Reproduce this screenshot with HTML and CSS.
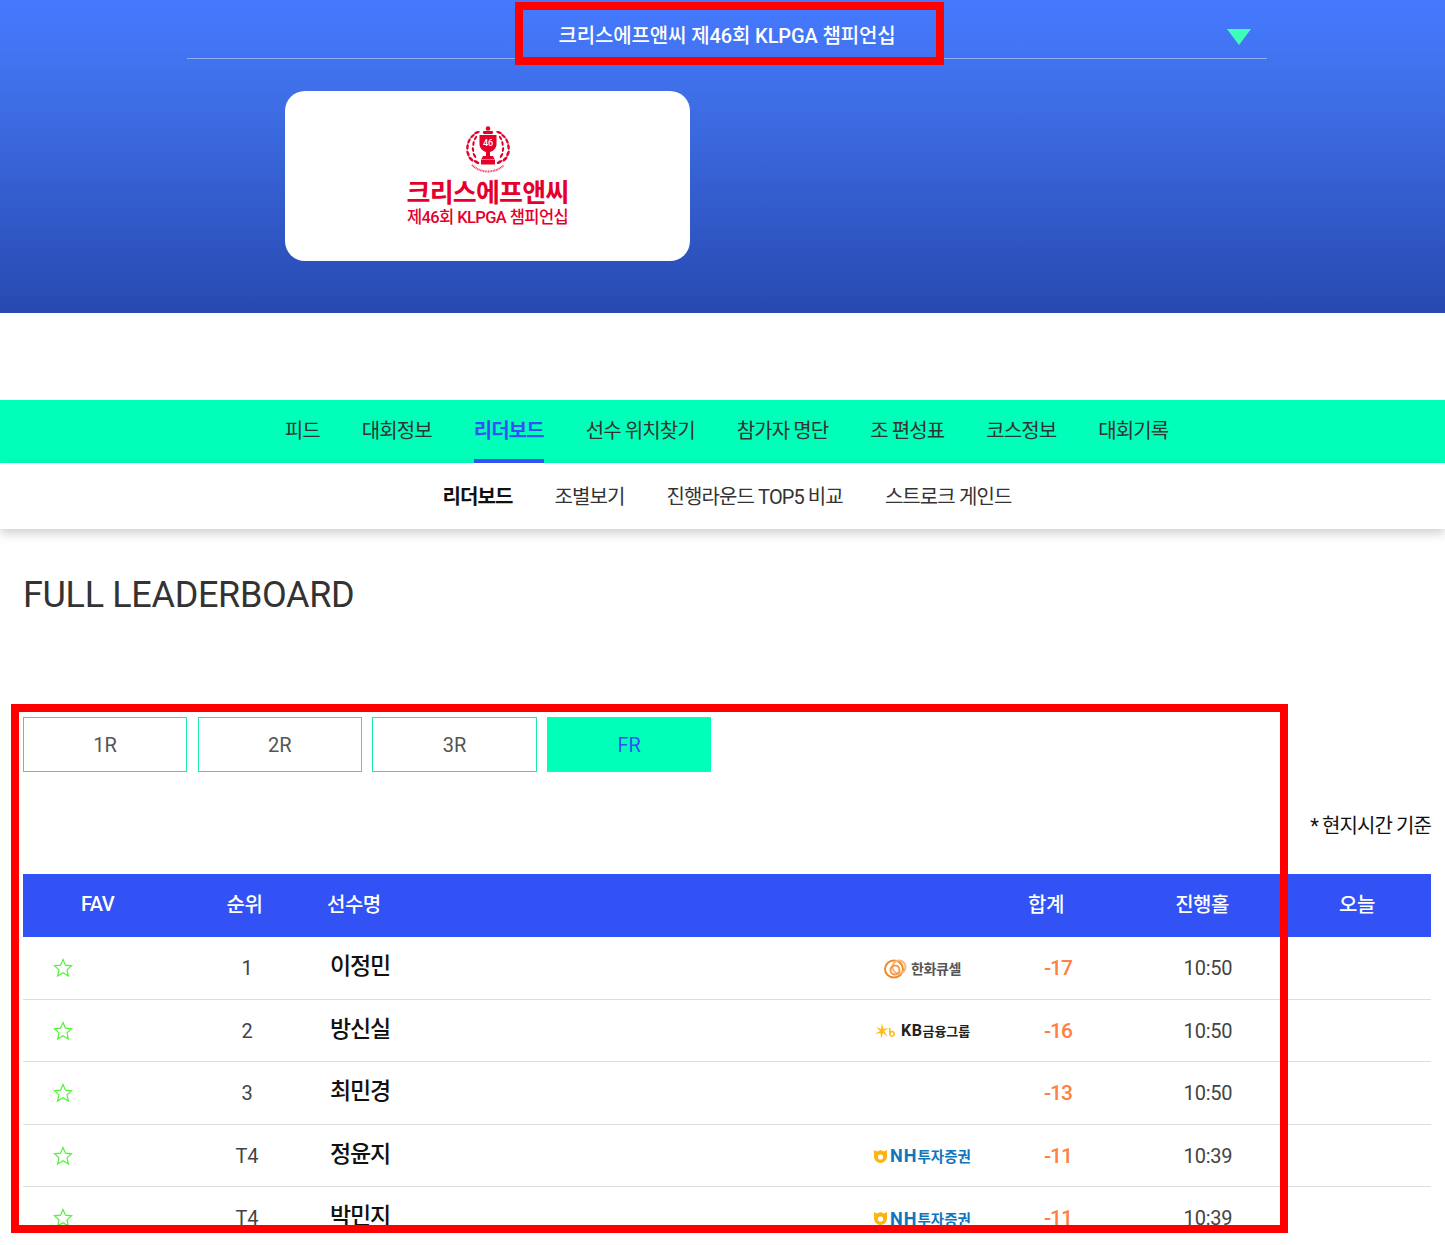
FILE: index.html
```html
<!DOCTYPE html>
<html lang="ko">
<head>
  <meta charset="UTF-8">
  <title>FULL LEADERBOARD</title>
  <link rel="stylesheet" href="styles.css">
</head>
<body>
  <div class="page">
    <header class="hero">
      <div class="tour-select">
        <span class="tour-name">크리스에프앤씨 제46회 KLPGA 챔피언십</span>
        <span class="tour-arrow"></span>
      </div>
      <div class="tour-card">
        <svg class="trophy" viewBox="0 0 48 48" width="48" height="48">
          <g fill="#e4002b">
            <circle cx="24" cy="2.500" r="2.300"/>
            <rect x="19" y="5" width="10" height="3" rx="1"/>
            <path d="M15.500 9h17v9c0 4-3 7-6.500 8v4h3l1.500 3h-13l1.500-3h3v-4c-3.500-1-6.500-4-6.500-8z"/>
            <rect x="17" y="33.500" width="14" height="5"/>
            <ellipse cx="13" cy="6.500" rx="3" ry="1.200" transform="rotate(-20 13 6.500)"/>
            <ellipse cx="8.500" cy="10" rx="3" ry="1.200" transform="rotate(-45 8.500 10)"/>
            <ellipse cx="11.500" cy="12" rx="2.500" ry="1.100" transform="rotate(-60 11.500 12)"/>
            <ellipse cx="5" cy="15" rx="3" ry="1.200" transform="rotate(-65 5 15)"/>
            <ellipse cx="9.500" cy="17.500" rx="2.500" ry="1.100" transform="rotate(-80 9.500 17.500)"/>
            <ellipse cx="3.500" cy="21" rx="3" ry="1.300" transform="rotate(-85 3.500 21)"/>
            <ellipse cx="9" cy="23.500" rx="2.600" ry="1.100" transform="rotate(80 9 23.500)"/>
            <ellipse cx="4" cy="27.500" rx="3.200" ry="1.300" transform="rotate(70 4 27.500)"/>
            <ellipse cx="10.500" cy="29.500" rx="2.800" ry="1.200" transform="rotate(60 10.500 29.500)"/>
            <ellipse cx="7" cy="33" rx="3.200" ry="1.300" transform="rotate(45 7 33)"/>
            <ellipse cx="12.500" cy="36" rx="3.200" ry="1.300" transform="rotate(30 12.500 36)"/>
            <ellipse cx="35" cy="6.500" rx="3" ry="1.200" transform="rotate(20 35 6.500)"/>
            <ellipse cx="39.500" cy="10" rx="3" ry="1.200" transform="rotate(45 39.500 10)"/>
            <ellipse cx="36.500" cy="12" rx="2.500" ry="1.100" transform="rotate(60 36.500 12)"/>
            <ellipse cx="43" cy="15" rx="3" ry="1.200" transform="rotate(65 43 15)"/>
            <ellipse cx="38.500" cy="17.500" rx="2.500" ry="1.100" transform="rotate(80 38.500 17.500)"/>
            <ellipse cx="44.500" cy="21" rx="3" ry="1.300" transform="rotate(85 44.500 21)"/>
            <ellipse cx="39" cy="23.500" rx="2.600" ry="1.100" transform="rotate(-80 39 23.500)"/>
            <ellipse cx="44" cy="27.500" rx="3.200" ry="1.300" transform="rotate(-70 44 27.500)"/>
            <ellipse cx="37.500" cy="29.500" rx="2.800" ry="1.200" transform="rotate(-60 37.500 29.500)"/>
            <ellipse cx="41" cy="33" rx="3.200" ry="1.300" transform="rotate(-45 41 33)"/>
            <ellipse cx="35.500" cy="36" rx="3.200" ry="1.300" transform="rotate(-30 35.500 36)"/>
          </g>
          <path d="M8 39c4 4 10 6.500 16 6.500s12-2.500 16-6.500" fill="none" stroke="#e4002b" stroke-width="2" stroke-dasharray="1 .6" opacity=".75"/>
          <text x="24" y="20" text-anchor="middle" class="trophy-num">46</text>
        </svg>
        <div class="card-title">크리스에프앤씨</div>
        <div class="card-sub">제46회 KLPGA 챔피언십</div>
      </div>
    </header>

    <nav class="main-nav">
      <a href="#">피드</a>
      <a href="#">대회정보</a>
      <a href="#" class="on">리더보드</a>
      <a href="#">선수 위치찾기</a>
      <a href="#">참가자 명단</a>
      <a href="#">조 편성표</a>
      <a href="#">코스정보</a>
      <a href="#">대회기록</a>
    </nav>
    <nav class="sub-nav">
      <a href="#" class="on">리더보드</a>
      <a href="#">조별보기</a>
      <a href="#">진행라운드 TOP5 비교</a>
      <a href="#">스트로크 게인드</a>
    </nav>

    <main class="content">
      <h1 class="board-title">FULL LEADERBOARD</h1>
      <div class="round-tabs">
        <a href="#">1R</a>
        <a href="#">2R</a>
        <a href="#">3R</a>
        <a href="#" class="on">FR</a>
      </div>
      <p class="time-note">* 현지시간 기준</p>

      <div class="board">
        <div class="board-head">
          <span>FAV</span>
          <span>순위</span>
          <span class="head-name">선수명</span>
          <span>합계</span>
          <span>진행홀</span>
          <span class="head-today">오늘</span>
        </div>

        <div class="board-row">
          <span class="fav"><svg class="star" viewBox="0 0 20 20" width="20" height="20"><path d="M10 1.500l2.500 5.700 6.100.6-4.600 4.100 1.400 6.100-5.400-3.200-5.400 3.200 1.400-6.100L1.400 7.800l6.100-.6z"/></svg></span>
          <span class="rank">1</span>
          <span class="player">이정민</span>
          <span class="sponsor hanwha">
            <svg viewBox="0 0 24 24" width="24" height="24" fill="none" stroke="#f08a24" stroke-width="2"><ellipse cx="10" cy="13" rx="9" ry="8.500"/><circle cx="15" cy="11" r="6.500" stroke="#f7b676"/><circle cx="11" cy="14" r="4.500" stroke="#f39a4a"/></svg>
            <b>한화큐셀</b>
          </span>
          <span class="total">-17</span>
          <span class="thru">10:50</span>
        </div>
        <div class="board-row">
          <span class="fav"><svg class="star" viewBox="0 0 20 20" width="20" height="20"><path d="M10 1.500l2.500 5.700 6.100.6-4.600 4.100 1.400 6.100-5.400-3.200-5.400 3.200 1.400-6.100L1.400 7.800l6.100-.6z"/></svg></span>
          <span class="rank">2</span>
          <span class="player">방신실</span>
          <span class="sponsor kb">
            <svg viewBox="0 0 22 16" width="22" height="16" fill="#fbbc15"><path d="M7 0l1.500 6L14 5 9 8l4 6-5-4-2 6-.5-6L0 11l5-3L1 4l5 2z"/><path d="M14 5h1.600v3.200a3 3 0 1 1-1.600 2.700zM15.600 11a1.400 1.400 0 1 0 2.800 0 1.400 1.400 0 1 0-2.800 0z" fill-rule="evenodd"/></svg>
            <b><span class="logo-latin">KB</span>금융그룹</b>
          </span>
          <span class="total">-16</span>
          <span class="thru">10:50</span>
        </div>
        <div class="board-row">
          <span class="fav"><svg class="star" viewBox="0 0 20 20" width="20" height="20"><path d="M10 1.500l2.500 5.700 6.100.6-4.600 4.100 1.400 6.100-5.400-3.200-5.400 3.200 1.400-6.100L1.400 7.800l6.100-.6z"/></svg></span>
          <span class="rank">3</span>
          <span class="player">최민경</span>
          <span class="sponsor"></span>
          <span class="total">-13</span>
          <span class="thru">10:50</span>
        </div>
        <div class="board-row">
          <span class="fav"><svg class="star" viewBox="0 0 20 20" width="20" height="20"><path d="M10 1.500l2.500 5.700 6.100.6-4.600 4.100 1.400 6.100-5.400-3.200-5.400 3.200 1.400-6.100L1.400 7.800l6.100-.6z"/></svg></span>
          <span class="rank">T4</span>
          <span class="player">정윤지</span>
          <span class="sponsor nh">
            <svg viewBox="0 0 13 14" width="13" height="14"><path d="M0 1l3 1.500L6.500 1 10 2.500 13 1v6.500a6.500 6.500 0 0 1-13 0z" fill="#fbb415"/><circle cx="6.500" cy="8" r="2.600" fill="#fff"/></svg>
            <b><span class="logo-latin">NH</span>투자증권</b>
          </span>
          <span class="total">-11</span>
          <span class="thru">10:39</span>
        </div>
        <div class="board-row">
          <span class="fav"><svg class="star" viewBox="0 0 20 20" width="20" height="20"><path d="M10 1.500l2.500 5.700 6.100.6-4.600 4.100 1.400 6.100-5.400-3.200-5.400 3.200 1.400-6.100L1.400 7.800l6.100-.6z"/></svg></span>
          <span class="rank">T4</span>
          <span class="player">박민지</span>
          <span class="sponsor nh">
            <svg viewBox="0 0 13 14" width="13" height="14"><path d="M0 1l3 1.500L6.500 1 10 2.500 13 1v6.500a6.500 6.500 0 0 1-13 0z" fill="#fbb415"/><circle cx="6.500" cy="8" r="2.600" fill="#fff"/></svg>
            <b><span class="logo-latin">NH</span>투자증권</b>
          </span>
          <span class="total">-11</span>
          <span class="thru">10:39</span>
        </div>
      </div>
    </main>

    <div class="mark mark-top"></div>
    <div class="mark mark-board"></div>
  </div>
</body>
</html>
```

FILE: styles.css
```css
* {
  box-sizing: border-box;
}

html, body {
  margin: 0;
  padding: 0;
  background: #fff;
}

body {
  font-family: Roboto, "Noto Sans CJK KR", sans-serif;
  color: #333;
}

a {
  text-decoration: none;
  color: inherit;
}

.page {
  position: relative;
  width: 1445px;
  height: 1245px;
  overflow: hidden;
}

/* top banner */
.hero {
  height: 313px;
  padding-top: 1px;
  background: linear-gradient(180deg, #4579ff 0%, #3f6fe8 30%, #2749b0 100%);
}

.tour-select {
  display: flex;
  align-items: center;
  justify-content: center;
  position: relative;
  width: 1080px;
  height: 58px;
  margin: 0 0 0 187px;
  padding: 12px 0 2px;
  border-bottom: 1px solid #8fb0f5;
}

.tour-name {
  color: #fff;
  font-size: 20px;
  font-weight: 500;
  letter-spacing: -0.12px;
}

.tour-arrow {
  position: absolute;
  right: 16px;
  top: 28px;
  width: 0;
  height: 0;
  border-left: 12px solid transparent;
  border-right: 12px solid transparent;
  border-top: 16px solid #3effb9;
}

.tour-card {
  display: flex;
  flex-direction: column;
  align-items: center;
  width: 405px;
  height: 170px;
  margin: 32px 0 0 285px;
  padding-top: 35px;
  background: #fff;
  border-radius: 20px;
}

.trophy-num {
  fill: #fff;
  font-size: 9px;
  font-weight: 500;
}

.card-title {
  margin-top: 4px;
  color: #e4002b;
  font-size: 26px;
  font-weight: 700;
  line-height: 30px;
  letter-spacing: -0.8px;
}

.card-sub {
  color: #e4002b;
  font-size: 16.500px;
  font-weight: 500;
  line-height: 20px;
  letter-spacing: -0.6px;
}

/* navigation */
.main-nav {
  display: flex;
  justify-content: center;
  gap: 42px;
  height: 63px;
  margin-top: 87px;
  padding-left: 8px;
  background: #00ffb9;
}

.main-nav a,
.sub-nav a {
  display: block;
  font-size: 20px;
  letter-spacing: -0.9px;
  color: #333;
}

.main-nav a {
  line-height: 62px;
  height: 63px;
}

.main-nav a.on {
  color: #3352f6;
  font-weight: 700;
  border-bottom: 4px solid #3352f6;
}

.sub-nav {
  display: flex;
  justify-content: center;
  gap: 42px;
  height: 66px;
  padding-left: 9px;
  background: #fff;
  box-shadow: 0 4px 10px rgba(0, 0, 0, 0.2);
}

.sub-nav a {
  line-height: 68px;
}

.sub-nav a.on {
  color: #111;
  font-weight: 700;
}

/* leaderboard */
.content {
  padding: 0 14px 0 23px;
}

.board-title {
  margin: 42px 0 0;
  font-size: 36px;
  font-weight: 400;
  line-height: 48px;
  letter-spacing: -0.33px;
  color: #333;
}

.round-tabs {
  display: flex;
  gap: 10.500px;
  margin-top: 98px;
}

.round-tabs a {
  width: 164.200px;
  height: 55px;
  border: 1px solid #1ee8ac;
  font-size: 20px;
  line-height: 54px;
  text-align: center;
  color: #555;
}

.round-tabs a.on {
  background: #00ffb9;
  border-color: #00ffb9;
  color: #3352f6;
}

.time-note {
  margin: 40px 0 0;
  font-size: 20px;
  line-height: 28px;
  letter-spacing: -0.9px;
  text-align: right;
  color: #111;
}

.board {
  margin-top: 34px;
}

.board-head {
  display: grid;
  grid-template-columns: 149px 145px 1fr 156px 156px 151px;
  align-items: center;
  height: 63px;
  padding-bottom: 4px;
  background: #3352f6;
  color: #fff;
  font-size: 20px;
  font-weight: 500;
  letter-spacing: -0.5px;
  text-align: center;
}

.board-head .head-name {
  padding-left: 10px;
  text-align: left;
}

.board-head .head-today {
  padding-left: 3px;
}

.board-row {
  display: grid;
  grid-template-columns: 151px 146px 1fr 121px 150px 150px 148px;
  align-items: center;
  height: 62.500px;
  padding-top: 0.8px;
  border-bottom: 1px solid #ddd;
  font-size: 20px;
  color: #444;
  text-align: center;
}

.fav {
  display: flex;
  padding-left: 30px;
}

.star {
  fill: none;
  stroke: #55f03c;
  stroke-width: 1.200;
}

.player {
  margin-top: -8px;
  padding-left: 10px;
  font-size: 23px;
  font-weight: 500;
  letter-spacing: -1.2px;
  text-align: left;
  color: #111;
}

.sponsor {
  display: flex;
  align-items: center;
  justify-content: center;
  gap: 3px;
}

.sponsor b {
  font-size: 13px;
  letter-spacing: -0.1px;
}

.logo-latin {
  font-size: 16px;
  letter-spacing: 0.6px;
}

.hanwha b {
  font-size: 14px;
  letter-spacing: -0.4px;
  color: #555;
}

.kb {
  gap: 4px;
}

.kb b {
  color: #222;
}

.nh b {
  font-size: 14.500px;
  color: #0f75bc;
  letter-spacing: 0;
}

.nh .logo-latin {
  font-size: 18px;
  letter-spacing: 1px;
}

.total {
  font-size: 21px;
  font-weight: 500;
  letter-spacing: -1px;
  color: #ff8040;
}

.thru {
  letter-spacing: -0.2px;
  color: #444;
}

/* red annotation boxes in the capture */
.mark {
  position: absolute;
  border: 8px solid #ff0000;
  pointer-events: none;
}

.mark-top {
  left: 515px;
  top: 2px;
  width: 429px;
  height: 63px;
}

.mark-board {
  left: 11px;
  top: 704px;
  width: 1277px;
  height: 529px;
}
```
